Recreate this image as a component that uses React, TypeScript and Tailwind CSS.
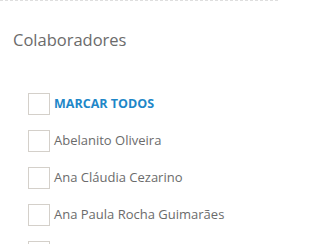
import React from "react";

const names = [
  "Abelanito Oliveira",
  "Ana Cláudia Cezarino",
  "Ana Paula Rocha Guimarães",
  "Ana Beatriz Souza",
];

function Box() {
  return <span className="block w-[22px] h-[22px] shrink-0 border border-[#d4d0ca] bg-white" />;
}

export default function App() {
  return (
    <div
      className="w-[278px] h-[244px] overflow-hidden bg-white border-t border-dashed border-[#dedede]"
      style={{ fontFamily: '"Open Sans", sans-serif' }}
    >
      <h2 className="pl-[13px] pt-[27px] text-[16.5px] leading-[24px] text-[#6b6b6b]">Colaboradores</h2>
      <ul className="pl-[28px] pt-[41px] flex flex-col gap-[15px]">
        <li className="flex items-center gap-[4px] h-[22px]">
          <Box />
          <span className="text-[12.5px] font-bold text-[#1e87c8]">MARCAR TODOS</span>
        </li>
        {names.map((n) => (
          <li key={n} className="flex items-center gap-[4px] h-[22px]">
            <Box />
            <span className="text-[13px] text-[#6b6b6b]">{n}</span>
          </li>
        ))}
      </ul>
    </div>
  );
}
